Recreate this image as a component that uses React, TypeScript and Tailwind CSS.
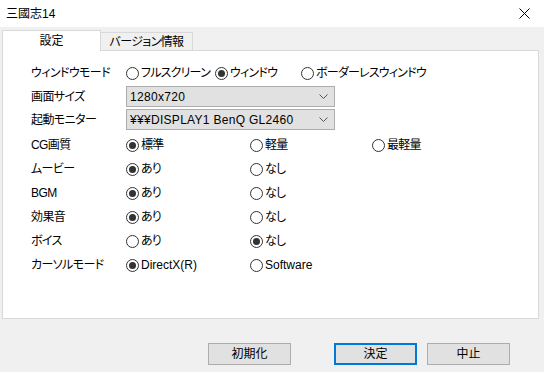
import React from "react";

const font = "[font-family:'Liberation_Sans','Noto_Sans_CJK_JP',sans-serif]";

function Radio({ checked, label, className = "", latin }: { checked?: boolean; label: string; className?: string; latin?: boolean }) {
  return (
    <div className={`flex items-center ${className}`}>
      <div className="w-[13px] h-[13px] rounded-full border border-[#333333] bg-white flex items-center justify-center shrink-0">
        {checked && <div className="w-[7px] h-[7px] rounded-full bg-[#333333]" />}
      </div>
      {latin ? (
        <span className="ml-[2px] text-[12px] leading-none text-black whitespace-nowrap">{label}</span>
      ) : (
        <span className="ml-[2px] text-[12px] leading-none text-black whitespace-nowrap tracking-[-0.8px] [font-feature-settings:'palt']">{label}</span>
      )}
    </div>
  );
}

function Combo({ value }: { value: string }) {
  return (
    <div className="w-[209px] h-[21px] border border-[#adadad] bg-[#e1e1e1] flex items-center justify-between pl-[3px] pr-[6px]">
      <span className="text-[12px] leading-none text-black tracking-[0.3px]">{value}</span>
      <svg width="9" height="5" viewBox="0 0 9 5">
        <path d="M0.5 0.5 L4.5 4.5 L8.5 0.5" fill="none" stroke="#555" strokeWidth="1" />
      </svg>
    </div>
  );
}

function Label({ text }: { text: string }) {
  return <div className="w-[95px] shrink-0 text-[12px] leading-none text-black whitespace-nowrap tracking-[-0.6px] [font-feature-settings:'palt']">{text}</div>;
}

function Row({ label, children, h = "h-[24px]" }: { label: string; children: React.ReactNode; h?: string }) {
  return (
    <div className={`flex items-center ${h}`}>
      <Label text={label} />
      {children}
    </div>
  );
}

function Btn({ text, primary }: { text: string; primary?: boolean }) {
  return (
    <div
      className={`w-[83px] h-[22px] flex items-center justify-center bg-[#e1e1e1] text-[12px] leading-none text-black ${
        primary ? "border-2 border-[#0078d7]" : "border border-[#adadad]"
      }`}
    >
      {text}
    </div>
  );
}

export default function App() {
  return (
    <div className={`w-[544px] h-[372px] bg-[#f0f0f0] flex flex-col overflow-hidden ${font}`}>
      {/* Title bar */}
      <div className="h-[27px] bg-white flex items-center justify-between pl-[6px] pr-[14px] shrink-0">
        <span className="text-[12px] leading-none text-black [font-feature-settings:'palt']">三國志14</span>
        <svg width="11" height="11" viewBox="0 0 11 11">
          <path d="M0.5 0.5 L10.5 10.5 M10.5 0.5 L0.5 10.5" stroke="#000" strokeWidth="1" />
        </svg>
      </div>

      {/* Tabs */}
      <div className="pl-[2px] pt-[3px] flex items-start shrink-0 relative z-10">
        <div className="w-[99px] h-[21px] bg-white border border-b-0 border-[#d9d9d9] flex items-center justify-center text-[12px] leading-none text-black">
          設定
        </div>
        <div className="mt-[2px] w-[92px] h-[18px] bg-[#f0f0f0] border border-l-0 border-b-0 border-[#d9d9d9] flex items-center justify-center text-[12px] leading-none text-black tracking-[-0.6px] [font-feature-settings:'palt']">
          バージョン情報
        </div>
      </div>

      {/* Panel */}
      <div className="ml-[2px] w-[537px] h-[269px] -mt-[1px] bg-white border border-[#d9d9d9] shrink-0 pl-[28px] pt-[11px] flex flex-col">
        <Row label="ウィンドウモード" h="h-[22px]">
          <Radio label="フルスクリーン" className="w-[89px]" />
          <Radio label="ウィンドウ" checked className="w-[86px]" />
          <Radio label="ボーダーレスウィンドウ" />
        </Row>
        <div className="mt-[2px] flex items-center h-[21px]">
          <Label text="画面サイズ" />
          <Combo value="1280x720" />
        </div>
        <div className="mt-[2px] flex items-center h-[21px]">
          <Label text="起動モニター" />
          <Combo value="¥¥¥DISPLAY1 BenQ GL2460" />
        </div>
        <div className="mt-[3px]" />
        <Row label="CG画質">
          <Radio label="標準" checked className="w-[124px]" />
          <Radio label="軽量" className="w-[122px]" />
          <Radio label="最軽量" />
        </Row>
        <Row label="ムービー">
          <Radio label="あり" checked className="w-[124px]" />
          <Radio label="なし" />
        </Row>
        <Row label="BGM">
          <Radio label="あり" checked className="w-[124px]" />
          <Radio label="なし" />
        </Row>
        <Row label="効果音">
          <Radio label="あり" checked className="w-[124px]" />
          <Radio label="なし" />
        </Row>
        <Row label="ボイス">
          <Radio label="あり" className="w-[124px]" />
          <Radio label="なし" checked />
        </Row>
        <Row label="カーソルモード">
          <Radio label="DirectX(R)" checked latin className="w-[124px]" />
          <Radio label="Software" latin />
        </Row>
      </div>

      {/* Buttons */}
      <div className="mt-[24px] flex items-start pl-[208px]">
        <Btn text="初期化" />
        <div className="w-[43px]" />
        <Btn text="決定" primary />
        <div className="w-[10px]" />
        <Btn text="中止" />
      </div>
    </div>
  );
}
